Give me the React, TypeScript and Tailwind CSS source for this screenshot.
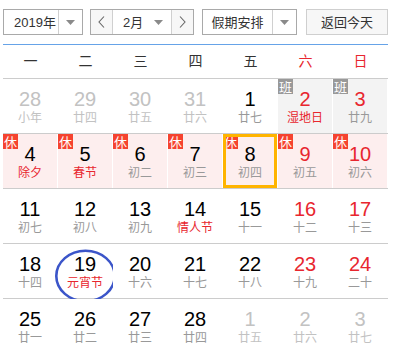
import React from "react";

type Cell = {
  d: number;
  l: string;
  faded?: boolean;
  redNum?: boolean;
  redLunar?: boolean;
  badge?: "休" | "班";
  sel?: boolean;
  circle?: boolean;
};

const weeks: Cell[][] = [
  [
    { d: 28, l: "小年", faded: true },
    { d: 29, l: "廿四", faded: true },
    { d: 30, l: "廿五", faded: true },
    { d: 31, l: "廿六", faded: true },
    { d: 1, l: "廿七" },
    { d: 2, l: "湿地日", redNum: true, redLunar: true, badge: "班" },
    { d: 3, l: "廿九", redNum: true, badge: "班" },
  ],
  [
    { d: 4, l: "除夕", redLunar: true, badge: "休" },
    { d: 5, l: "春节", redLunar: true, badge: "休" },
    { d: 6, l: "初二", badge: "休" },
    { d: 7, l: "初三", badge: "休" },
    { d: 8, l: "初四", badge: "休", sel: true },
    { d: 9, l: "初五", redNum: true, badge: "休" },
    { d: 10, l: "初六", redNum: true, badge: "休" },
  ],
  [
    { d: 11, l: "初七" },
    { d: 12, l: "初八" },
    { d: 13, l: "初九" },
    { d: 14, l: "情人节", redLunar: true },
    { d: 15, l: "十一" },
    { d: 16, l: "十二", redNum: true },
    { d: 17, l: "十三", redNum: true },
  ],
  [
    { d: 18, l: "十四" },
    { d: 19, l: "元宵节", redLunar: true, circle: true },
    { d: 20, l: "十六" },
    { d: 21, l: "十七" },
    { d: 22, l: "十八" },
    { d: 23, l: "十九", redNum: true },
    { d: 24, l: "二十", redNum: true },
  ],
  [
    { d: 25, l: "廿一" },
    { d: 26, l: "廿二" },
    { d: 27, l: "廿三" },
    { d: 28, l: "廿四" },
    { d: 1, l: "廿五", faded: true },
    { d: 2, l: "廿六", faded: true },
    { d: 3, l: "廿七", faded: true },
  ],
];

const Tri = () => (
  <svg width="9" height="5" viewBox="0 0 9 5" className="block">
    <path d="M0 0 H9 L4.5 5 Z" fill="#8a8a8a" />
  </svg>
);

const Chevron = ({ dir }: { dir: "l" | "r" }) => (
  <svg width="7" height="12" viewBox="0 0 7 12" className="block">
    <path
      d={dir === "l" ? "M6 0.5 L1 6 L6 11.5" : "M1 0.5 L6 6 L1 11.5"}
      fill="none"
      stroke="#666"
      strokeWidth="1.1"
    />
  </svg>
);

const weekdays = ["一", "二", "三", "四", "五", "六", "日"];

export default function App() {
  return (
    <div
      className="w-[397px] h-[359px] bg-white overflow-hidden pl-[3px]"
      style={{ fontFamily: '"Liberation Sans", Arial, "Noto Sans CJK SC", sans-serif' }}
    >
      <div className="w-[385px]">
        {/* toolbar */}
        <div className="flex mt-[9px] h-[26px] text-[13px] text-[#333]">
          <div className="w-[80px] h-full border border-[#a9a9a9] flex bg-white">
            <div className="w-[55px] border-r border-[#d0d0d0] flex items-center pl-[10px] leading-none">
              2019年
            </div>
            <div className="flex-1 flex items-center justify-center">
              <Tri />
            </div>
          </div>
          <div className="ml-[7px] w-[104px] h-full border border-[#a9a9a9] flex">
            <div className="w-[22px] bg-[#f7f7f7] border-r border-[#d0d0d0] flex items-center justify-center">
              <Chevron dir="l" />
            </div>
            <div className="flex-1 flex items-center pl-[10px] pr-[8px] justify-between leading-none">
              <span>2月</span>
              <Tri />
            </div>
            <div className="w-[22px] bg-[#f7f7f7] border-l border-[#d0d0d0] flex items-center justify-center">
              <Chevron dir="r" />
            </div>
          </div>
          <div className="ml-[8px] w-[95px] h-full border border-[#a9a9a9] flex">
            <div className="w-[70px] border-r border-[#d0d0d0] flex items-center justify-center leading-none">
              假期安排
            </div>
            <div className="flex-1 flex items-center justify-center">
              <Tri />
            </div>
          </div>
          <div className="ml-[9px] w-[82px] h-full border border-[#cfcfcf] bg-[#f7f7f7] flex items-center justify-center leading-none">
            返回今天
          </div>
        </div>

        <div className="mt-[9px] h-px bg-[#66a3e8]" />

        {/* weekday header */}
        <div className="grid grid-cols-7 h-[34px] border-b border-[#cccccc] text-[14px]">
          {weekdays.map((w, i) => (
            <div
              key={w}
              className={`flex items-center justify-center ${i >= 5 ? "text-[#e8262e]" : "text-[#333]"}`}
            >
              {w}
            </div>
          ))}
        </div>

        {/* weeks */}
        {weeks.map((row, ri) => (
          <div
            key={ri}
            className={`grid grid-cols-7 h-[55px] ${ri < 4 ? "border-b border-[#cccccc]" : ""}`}
          >
            {row.map((c, ci) => {
              const bg =
                c.badge === "休" ? "bg-[#fdeeee]" : c.badge === "班" ? "bg-[#f3f3f3]" : "bg-white";
              const numColor = c.faded
                ? "text-[#c2c2c2]"
                : c.redNum
                ? "text-[#e8262e]"
                : "text-black";
              const lunarColor = c.faded
                ? "text-[#c2c2c2]"
                : c.redLunar
                ? "text-[#e8262e]"
                : "text-[#999]";
              return (
                <div key={ci} className="border-r border-white relative">
                  <div className={`h-full ${bg} flex flex-col items-center pt-[10px]`}>
                    <div className={`text-[20px] leading-[20px] ${numColor}`}>{c.d}</div>
                    <div
                      className={`mt-[2px] text-[12px] leading-[12px] ${lunarColor}`}
                      style={{ fontFamily: '"Noto Sans CJK SC", sans-serif' }}
                    >
                      {c.l}
                    </div>
                  </div>
                  {c.badge && (
                    <div
                      className={`absolute left-0 top-0 w-[15px] h-[15px] flex items-center justify-center text-white text-[13px] leading-none ${
                        c.badge === "休" ? "bg-[#f5432f]" : "bg-[#999999]"
                      }`}
                      style={{ fontFamily: '"Noto Sans CJK SC", sans-serif' }}
                    >
                      {c.badge}
                    </div>
                  )}
                  {c.sel && (
                    <div className="absolute inset-0 border-[3px] border-[#ffb400]" />
                  )}
                  {c.circle && (
                    <svg
                      className="absolute left-[-3px] top-[5px] pointer-events-none"
                      width="62"
                      height="54"
                      viewBox="0 0 62 54"
                    >
                      <ellipse
                        cx="30.5"
                        cy="27"
                        rx="29.2"
                        ry="25.3"
                        fill="none"
                        stroke="#3b55c9"
                        strokeWidth="2.6"
                      />
                    </svg>
                  )}
                </div>
              );
            })}
          </div>
        ))}
      </div>
    </div>
  );
}
